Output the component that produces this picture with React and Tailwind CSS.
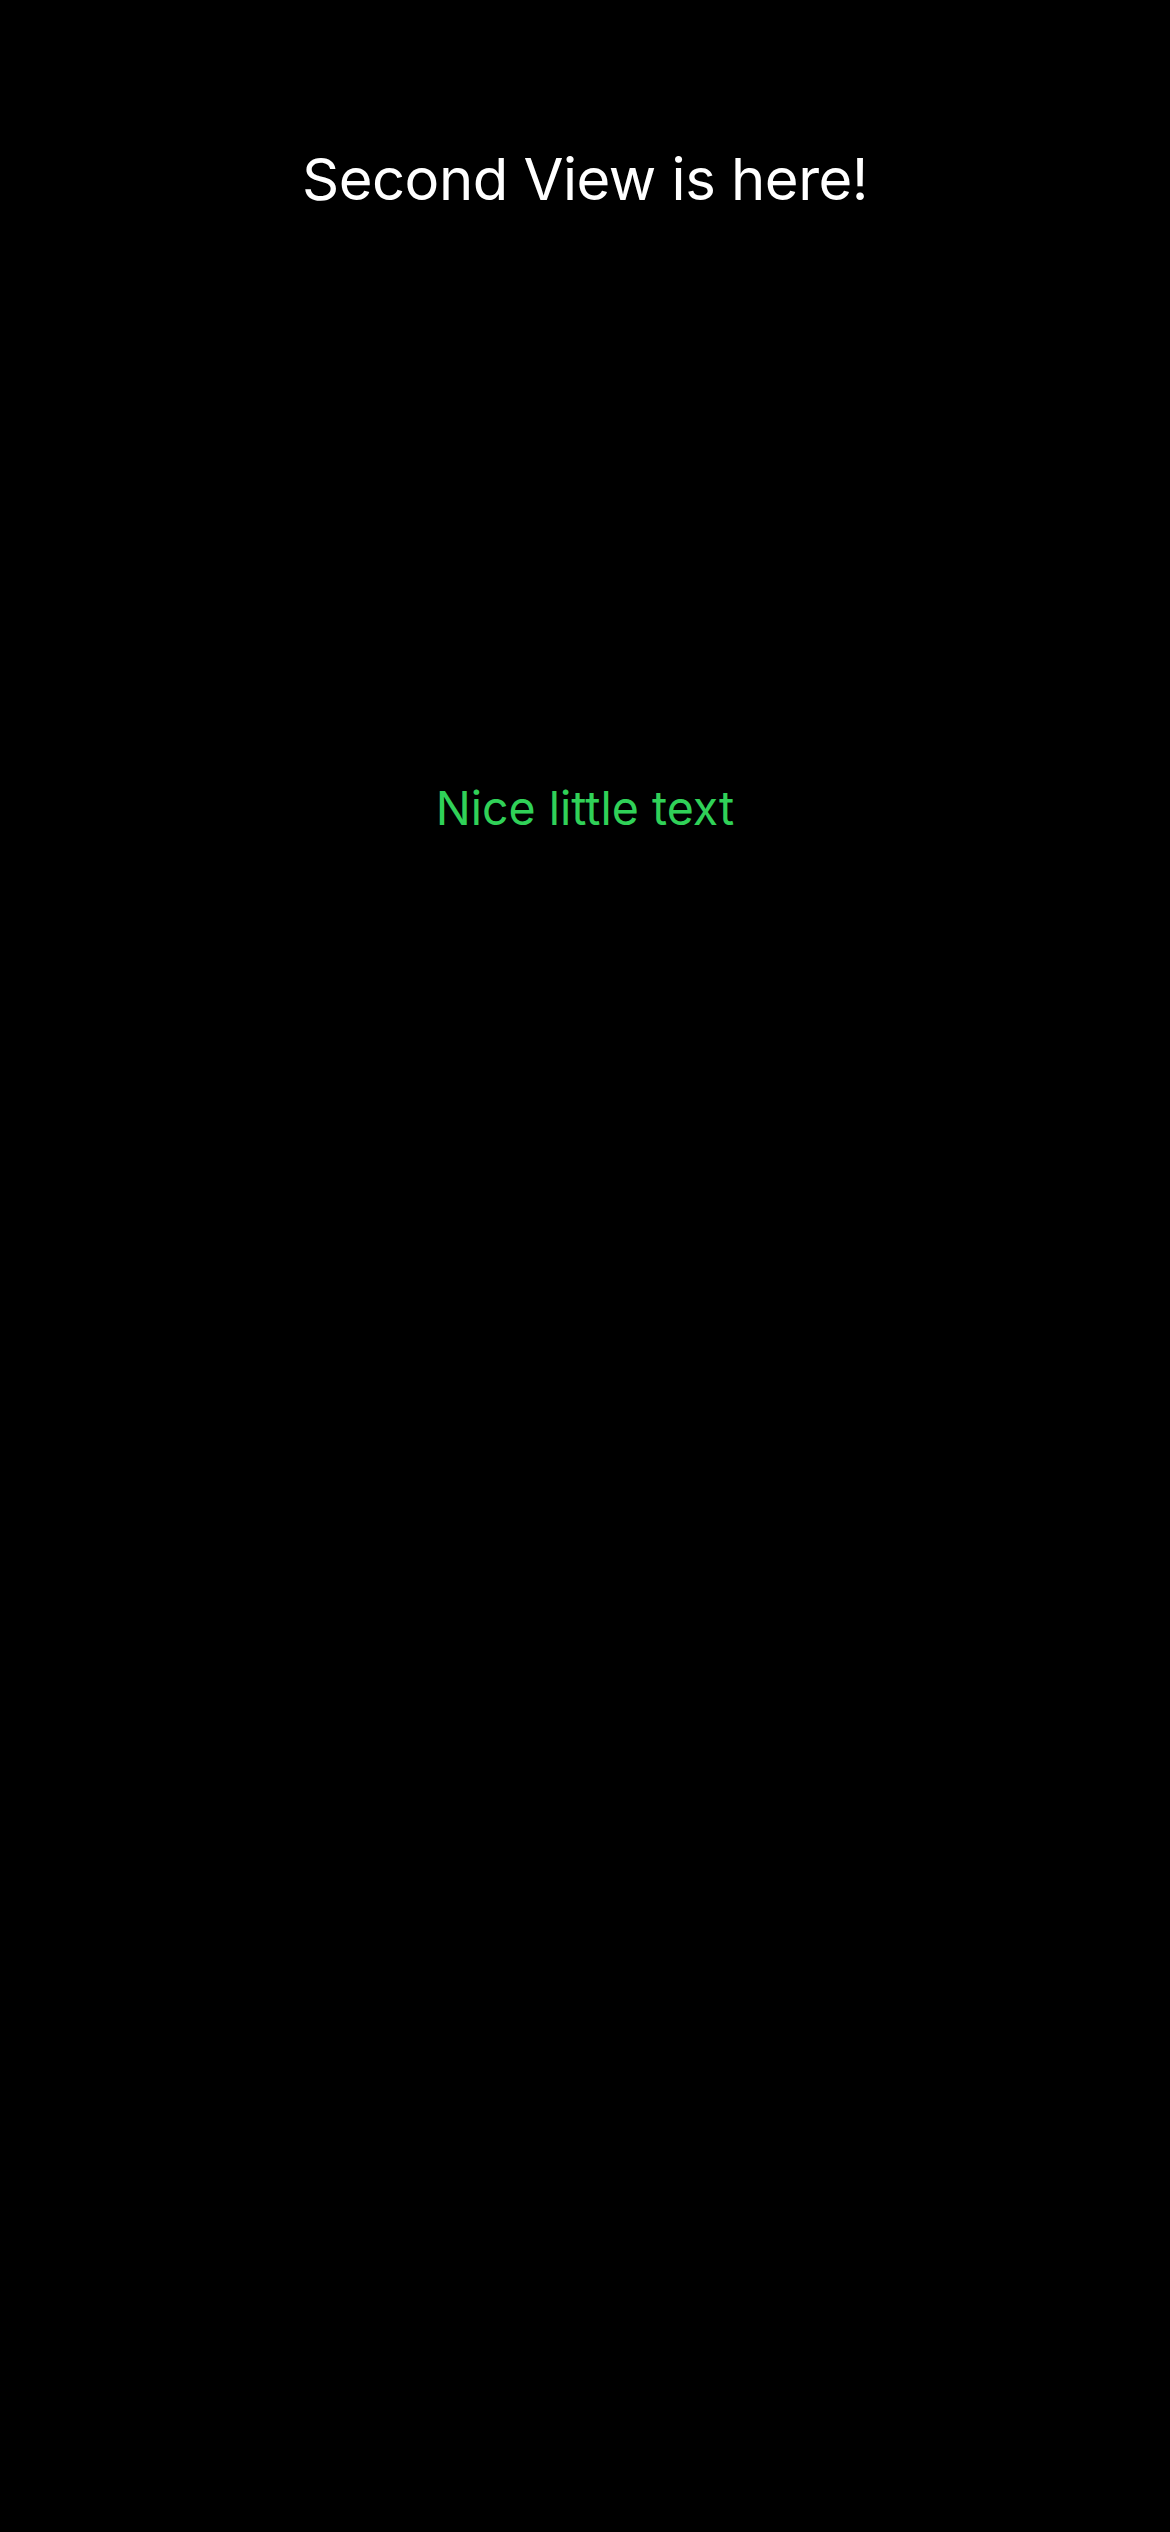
export default function App() {
  return (
    <div className="min-h-screen w-full bg-black flex flex-col items-center" style={{ fontFamily: 'Inter, "Noto Sans", sans-serif' }}>
      <div className="pt-[143px] text-white text-[58px] leading-[72px] tracking-[-0.5px]">Second View is here!</div>
      <div className="mt-[565px] text-[#30d158] text-[46.5px] leading-[56px]">Nice little text</div>
    </div>
  );
}
